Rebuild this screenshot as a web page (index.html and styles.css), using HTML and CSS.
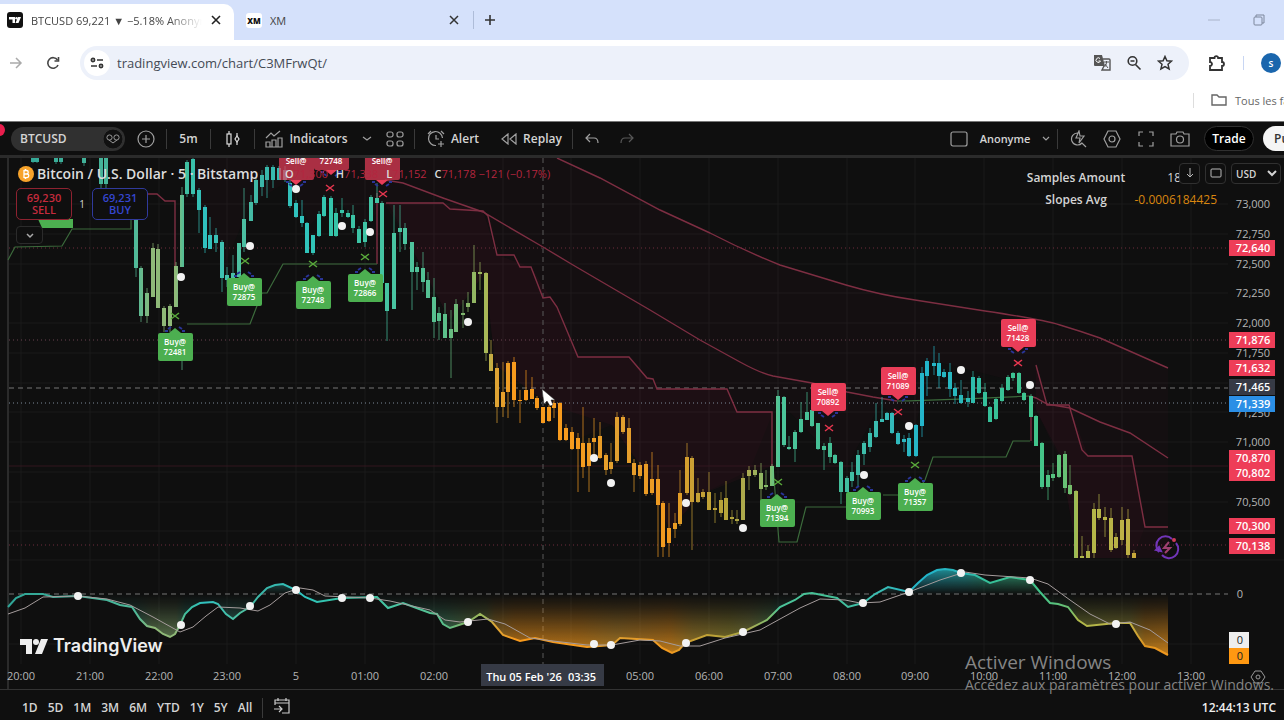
FILE: index.html
```html
<!DOCTYPE html>
<html lang="en">
<head>
    <meta charset="UTF-8">
    <title>BTCUSD 69,221</title>
    <link rel="stylesheet" href="styles.css">
</head>
<body>
<div class="tabs">
    <div class="tab active">
        <svg width="16" height="16" viewBox="0 0 16 16"><rect width="16" height="16" rx="3" fill="#111"/><path d="M2 5h6v6H5.500V7.500H2zM11 5h3l-2.500 6h-3z" fill="#fff"/><circle cx="9.500" cy="6.200" r="1.200" fill="#fff"/></svg>
        <a href="#" class="tab-title">BTCUSD 69,221 ▼ −5.18% Anonyme</a>
        <button class="plain" aria-label="Close tab"><svg width="12" height="12" viewBox="0 0 12 12"><path d="M2 2l8 8M10 2l-8 8" stroke="#222" stroke-width="1.600"/></svg></button>
    </div>
    <div class="tab">
        <span class="xm">XM</span>
        <a href="#" class="tab-title">XM</a>
        <button class="plain" aria-label="Close tab"><svg width="12" height="12" viewBox="0 0 12 12"><path d="M2 2l8 8M10 2l-8 8" stroke="#333" stroke-width="1.500"/></svg></button>
    </div>
    <button class="plain new-tab" aria-label="New tab"><svg width="12" height="12" viewBox="0 0 12 12"><path d="M6 1v10M1 6h10" stroke="#333" stroke-width="1.600"/></svg></button>
    <div class="window-buttons">
        <button class="plain" aria-label="Minimize"><svg width="14" height="14" viewBox="0 0 14 14"><path d="M1 7h12" stroke="#a9b4ca"/></svg></button>
        <button class="plain" aria-label="Restore"><svg width="14" height="14" viewBox="0 0 14 14" fill="none" stroke="#7d879c"><rect x="2" y="4" width="8" height="8" rx="1"/><path d="M4 4V2h8v8h-2"/></svg></button>
    </div>
</div>
<div class="address-row">
    <button class="plain" aria-label="Forward"><svg width="14" height="14" viewBox="0 0 14 14" fill="none" stroke="#aaa" stroke-width="1.500"><path d="M1 7h11M7 2l5 5-5 5"/></svg></button>
    <button class="plain" aria-label="Reload"><svg width="14" height="14" viewBox="0 0 14 14" fill="none" stroke="#444" stroke-width="1.600"><path d="M12 9A5.300 5.300 0 1 1 11.500 4"/><path d="M12.500 1v4H8.500"/></svg></button>
    <div class="address">
        <span class="site-info"><svg width="14" height="12" viewBox="0 0 14 12" fill="none" stroke="#333" stroke-width="1.700"><circle cx="3" cy="3" r="1.600"/><path d="M7 3h6M1 9h6"/><circle cx="11" cy="9" r="1.600"/></svg></span>
        <input type="text" aria-label="Address" value="tradingview.com/chart/C3MFrwQt/">
        <button class="plain" aria-label="Translate"><svg width="18" height="18" viewBox="0 0 18 18"><path d="M1 1h8l3 11H2a1 1 0 0 1-1-1z" fill="#555"/><path d="M10 5h6a1 1 0 0 1 1 1v10H9l2-4" fill="none" stroke="#555" stroke-width="1.400"/><path d="M11 8h5M13.500 7v1c0 3-2 5-2 5M12 10l3 4" fill="none" stroke="#555"/><path d="M7 4.500A2.300 2.300 0 1 0 7.500 7H5.500" fill="none" stroke="#fff"/></svg></button>
        <button class="plain" aria-label="Zoom"><svg width="16" height="16" viewBox="0 0 16 16" fill="none" stroke="#333" stroke-width="1.600"><circle cx="6.500" cy="6" r="4.300"/><path d="M9.500 9.500l5 5M4.500 6h4"/></svg></button>
        <button class="plain" aria-label="Bookmark"><svg width="16" height="16" viewBox="0 0 16 16" fill="none" stroke="#333" stroke-width="1.500"><path d="M8 1.500l1.900 4.300 4.600.4-3.500 3.100 1.100 4.600L8 11.500l-4.100 2.400L5 9.300 1.500 6.200l4.600-.4z"/></svg></button>
    </div>
    <button class="plain extensions" aria-label="Extensions"><svg width="18" height="18" viewBox="0 0 18 18" fill="none" stroke="#333" stroke-width="1.800"><path d="M2 4h4.500a1.800 1.800 0 0 1 3.600 0H14v4a2 2 0 0 1 0 4v4H2v-4a2 2 0 0 0 0-4z"/></svg></button>
    <span class="divider"></span>
    <button class="avatar">s</button>
</div>
<div class="bookmarks">
    <a href="#"><svg width="16" height="14" viewBox="0 0 16 14" fill="none" stroke="#666" stroke-width="1.400"><path d="M1 2h5l2 2h7v8H1z"/></svg><span>Tous les favoris</span></a>
</div>

<div class="tv">
    <div class="tv-top">
        <button class="symbol">BTCUSD<svg width="22" height="22" viewBox="0 0 22 22" fill="none" stroke="#999"><circle cx="11" cy="11" r="10" fill="#111" stroke="#333"/><path d="M11 15l-4-3M11 15l4-3"/><circle cx="7.500" cy="9.500" r="2.600"/><circle cx="14.500" cy="9.500" r="2.600"/></svg></button>
        <button class="tool add" aria-label="Compare"><svg width="18" height="18" viewBox="0 0 18 18"><circle cx="9" cy="9" r="8"/><path d="M9 5v8M5 9h8"/></svg></button>
        <span class="sep"></span>
        <button class="tool">5m</button>
        <span class="sep"></span>
        <button class="tool" aria-label="Chart type"><svg width="16" height="18" viewBox="0 0 16 18" class="bright"><path d="M4 1v3M4 14v3M12 3v3M12 12v3"/><rect x="2" y="4" width="4" height="10"/><path d="M12 6l2 3-2 3-2-3z"/></svg></button>
        <span class="sep"></span>
        <button class="tool indicators"><svg width="18" height="18" viewBox="0 0 18 18"><path d="M1 8l5-5 3 3 6-5M1 17v-5h4v5zM7 17v-7h4v7zM13 17V8h4v9zM1 17h16"/></svg>Indicators</button>
        <button class="tool small" aria-label="Templates"><svg width="10" height="6" viewBox="0 0 10 6"><path d="M1 1l4 3 4-3"/></svg></button>
        <button class="tool mid" aria-label="Layouts"><svg width="18" height="16" viewBox="0 0 18 16"><rect x="1" y="1" width="6" height="5" rx="2"/><rect x="11" y="1" width="6" height="5" rx="2"/><rect x="1" y="10" width="6" height="5" rx="2"/><rect x="11" y="10" width="6" height="5" rx="2"/></svg></button>
        <span class="sep"></span>
        <button class="tool alert"><svg width="18" height="18" viewBox="0 0 18 18"><path d="M15.500 8A7 7 0 1 0 9 15.500M9 5v4h3M1 4l3-3M14 1l3 3M11 14h6M14 11v6"/></svg>Alert</button>
        <button class="tool replay"><svg width="16" height="12" viewBox="0 0 16 12"><path d="M7 1L1 6l6 5zM15 1L9 6l6 5z"/></svg>Replay</button>
        <span class="sep"></span>
        <button class="tool mid" aria-label="Undo"><svg width="14" height="12" viewBox="0 0 14 12"><path d="M5 1L1 5l4 4M1 5h8q4 0 4 5"/></svg></button>
        <button class="tool redo" aria-label="Redo"><svg width="14" height="12" viewBox="0 0 14 12"><path d="M9 1l4 4-4 4M13 5H5Q1 5 1 10"/></svg></button>
        <div class="tv-right">
            <button class="tool layout-name"><svg width="18" height="16" viewBox="0 0 18 16"><rect x="1" y="1" width="16" height="14" rx="2"/></svg>Anonyme<svg class="chevron" width="8" height="6" viewBox="0 0 8 6"><path d="M1 1l3 3 3-3"/></svg></button>
            <span class="sep"></span>
            <button class="tool icon" aria-label="Quick search"><svg width="18" height="18" viewBox="0 0 18 18"><path d="M9 3a6 6 0 1 0 4 10l4 4M10 1L7 8h4l-1 5 5-7h-4z"/></svg></button>
            <button class="tool icon" aria-label="Settings"><svg width="18" height="18" viewBox="0 0 18 18"><path d="M5 1h8l4 8-4 8H5L1 9z"/><circle cx="9" cy="9" r="3"/></svg></button>
            <button class="tool icon" aria-label="Fullscreen"><svg width="16" height="16" viewBox="0 0 16 16"><path d="M1 5V1h4M11 1h4v4M15 11v4h-4M5 15H1v-4"/></svg></button>
            <button class="tool icon" aria-label="Snapshot"><svg width="20" height="16" viewBox="0 0 20 16"><path d="M1 3h5l1-2h6l1 2h5v12H1z"/><circle cx="10" cy="8.500" r="3.500"/></svg></button>
            <button class="trade">Trade</button>
            <button class="publish">Publish</button>
        </div>
    </div>

    <div class="chart">
        <svg id="plot" viewBox="0 158 1284 531" preserveAspectRatio="xMinYMin meet">
            <defs>
                <linearGradient id="trend" gradientUnits="userSpaceOnUse" x1="0" y1="0" x2="1168" y2="0"></linearGradient>
                <linearGradient id="fade" gradientUnits="userSpaceOnUse" x1="0" y1="560" x2="0" y2="655">
                    <stop offset="0" stop-color="#fff"/>
                    <stop offset="0.360" stop-color="#000"/>
                    <stop offset="0.500" stop-color="#222"/>
                    <stop offset="1" stop-color="#ccc"/>
                </linearGradient>
                <mask id="fadeMask" maskUnits="userSpaceOnUse" x="0" y="555" width="1284" height="110"><rect x="0" y="555" width="1284" height="110" fill="url(#fade)"/></mask>
            </defs>
            <g id="grid"></g>
            <g class="cloud">
                <path class="light" d="M187 158H557L600 178 710 233 780 265 846 285 915 300 1020 317 1100 338 1168 368V527H1145L1133 558H1078L1060 460 1036 410 1010 380 930 360 915 430 880 405 845 470 778 400 750 470 700 495 670 530 640 465 612 425 575 440 550 405 495 365 485 273 450 320 410 245 385 205 365 225 335 200 310 225 290 180 250 205 225 265 205 220z"/>
                <path d="M388 203H443L483 211 497 255 531 267 557 307 578 357H629L657 389H727L737 412H772V466L700 495 670 530 640 465 612 425 550 405 495 365 485 273 450 320 410 245z"/>
                <path d="M1036 365L1047 405H1069L1088 456H1132L1145 527H1168V558H1078L1060 455 1036 410z"/>
            </g>
            <g class="levels">
                <path class="dots-red" d="M9 248H1228M9 545H1228"/>
                <path class="dots-gray" d="M9 340H1228"/>
                <path class="solid-red" d="M9 466H1228"/>
                <path class="dots-blue" d="M9 403H1228"/>
                <path class="dashes" d="M9 388H1228M9 594H1228"/>
                <path class="dashes vertical" d="M543 158V664"/>
            </g>
            <g class="lines">
                <path class="red" d="M557 158L600 178 660 210 710 233Q745 251 780 265L846 285Q880 295 915 300L985 311Q1040 319 1060 325T1100 338L1168 368"/>
                <path class="red" d="M385 180L403 183 443 198 483 212 543 247 573 265 650 310 700 340 740 362Q760 373 773 376L812 383 847 392 873 397 897 401"/>
                <path class="green" d="M897 401Q950 400 1030 396"/>
                <path class="red" d="M1030 396L1036 398 1047 404 1070 408 1100 422 1130 433 1168 458"/>
                <path class="red" d="M386 203H443L450 209 483 211 488 216 497 255H514L520 267H531L543 298 550 297 557 307 578 357H629L647 378 653 379 657 389H727L737 412H772V466M1031 441V396M1036 365L1047 405H1069L1082 450 1088 456H1132L1145 527H1168M148 194H157L165 201H175V266M377 264V193"/>
                <path class="green" d="M8 260L15 247 62 246 72 229H131V219M187 324H250L262 293 267 293 283 264H377M773 466L779 542H797L806 507H848M883 495H915L925 480 933 457H1006L1013 441H1030"/>
            </g>
            <path d="M38 219h35v9H42z" fill="#4caf50"/>
            <g id="candles" stroke="url(#trend)"></g>
            <g id="osc"></g>
            <g id="marks"></g>
            <g id="axis"></g>
            <g transform="translate(1167 547)" fill="none" stroke="#7135b8" stroke-width="2"><path d="M-8 5A9 9 0 0 1 5-8M9-4A9 9 0 0 1-5 8"/><path d="M2-5l-5 6h6l-5 5" stroke="#a04070"/><path d="M-11 3l3-3 2 4z" fill="#8a4be0"/><circle cx="7" cy="-7" r="1" stroke="#d13a5a"/></g>
            <path d="M542 389l2 15 3-3 3 5 3-1-2-5h4z" fill="#fff" stroke="#222" stroke-width=".5"/>
            <g transform="translate(1258 677)" fill="none" stroke="#999"><path d="M-3-6h6l4 6-4 6h-6l-4-6z"/><circle r="2"/></g>
        </svg>

        <div class="legend">
            <svg width="16" height="16" viewBox="0 0 16 16"><circle cx="8" cy="8" r="8" fill="#f7a32b"/><path d="M6 4v8M6 4.500h2.500a1.700 1.700 0 0 1 0 3.500H6h3a1.800 1.800 0 0 1 0 3.600H6M7.500 3v2M7.500 11v2" fill="none" stroke="#fff" stroke-width="1.300"/></svg>
            <span class="name">Bitcoin / U.S. Dollar · 5 · Bitstamp</span>
            <span class="ohlc"><b>O</b>71,300 <b>H</b>71,338 <b>L</b>71,152 <b>C</b>71,178 −121 (−0.17%)</span>
        </div>
        <div class="deal">
            <button class="sell">69,230<br>SELL</button>
            <span>1</span>
            <button class="buy">69,231<br>BUY</button>
        </div>
        <button class="collapse" aria-label="Collapse legend"><svg width="8" height="6" viewBox="0 0 8 6" fill="none" stroke="#aaa" stroke-width="1.500"><path d="M1 1l3 3 3-3"/></svg></button>
        <table class="stats">
            <tr><th>Samples Amount</th><td class="count">18</td></tr>
            <tr><th>Slopes Avg</th><td>-0.0006184425</td></tr>
        </table>
        <div class="pane-tools">
            <button aria-label="Move pane down"><svg width="12" height="12" viewBox="0 0 12 12"><path d="M6 1v9M3 7l3 3 3-3"/></svg></button>
            <button aria-label="Maximize pane"><svg width="12" height="12" viewBox="0 0 12 12"><rect x="1" y="2" width="10" height="8" rx="1"/></svg></button>
            <select aria-label="Currency"><option>USD</option></select>
        </div>
        <div class="brand">
            <svg width="28" height="15" viewBox="0 0 28 15" fill="#eee"><path d="M0 0h12v15H6V6H0z"/><circle cx="16" cy="3" r="3"/><path d="M21 0h7l-6 15h-7z"/></svg>
            <span>TradingView</span>
        </div>
        <div class="watermark">
            <p class="title">Activer Windows</p>
            <p>Accédez aux paramètres pour activer Windows.</p>
        </div>
        <span class="record"></span>
    </div>

    <div class="tv-bottom">
        <button>1D</button>
        <button>5D</button>
        <button>1M</button>
        <button>3M</button>
        <button>6M</button>
        <button>YTD</button>
        <button>1Y</button>
        <button>5Y</button>
        <button>All</button>
        <span class="sep"></span>
        <button aria-label="Go to date"><svg width="18" height="18" viewBox="0 0 18 18" fill="none" stroke="#ccc" stroke-width="1.200"><path d="M2 8V3h14v13H9M2 6h14M5 1v3M13 1v3M1 12h8M6 9l3 3-3 3"/></svg></button>
        <span class="clock">12:44:13 UTC</span>
    </div>
</div>
<script src="script.js"></script>
</body>
</html>
```
FILE: styles.css
```css
* {
    box-sizing: border-box;
}
body {
    margin: 0;
    min-height: 100vh;
    display: flex;
    flex-direction: column;
    overflow: hidden;
    background-color: #ffffff;
    font-family: "Open Sans", "Noto Sans", sans-serif;
    font-size: 12px;
    color: #333333;
}
button, input, select {
    font: inherit;
    color: inherit;
    border: none;
    background: none;
    padding: 0;
}
a {
    color: inherit;
    text-decoration: none;
}
svg {
    flex: none;
}
.plain {
    display: flex;
    align-items: center;
    justify-content: center;
}

/* browser */
.tabs {
    height: 40px;
    background-color: #d5e1fb;
    display: flex;
    align-items: center;
}
.tab {
    width: 234px;
    height: 34px;
    padding: 0 12px 0 7px;
    display: flex;
    align-items: center;
    gap: 8px;
}
.tab.active {
    background-color: #ffffff;
    border-radius: 0 10px 0 0;
    height: 36px;
    padding-bottom: 4px;
    align-self: flex-end;
}
.tab + .tab {
    width: 240px;
    height: 18px;
    padding-left: 12px;
    padding-right: 13px;
    border-right: 1px solid #aebcd8;
}
.tab-title {
    flex: 1;
    overflow: hidden;
    white-space: nowrap;
    font-size: 11px;
    color: #444444;
}
.tab.active .tab-title {
    -webkit-mask-image: linear-gradient(90deg, #000 80%, transparent);
}
.xm {
    width: 16px;
    background-color: #ffffff;
    border-radius: 3px;
    font-size: 8px;
    font-weight: 800;
    line-height: 15px;
    text-align: center;
    color: #111111;
}
.new-tab {
    width: 32px;
}
.window-buttons {
    margin-left: auto;
    display: flex;
    gap: 31px;
    padding-right: 18px;
}
.address-row {
    height: 46px;
    display: flex;
    align-items: center;
    padding-left: 9px;
    gap: 23px;
}
.address {
    flex: 1;
    margin-left: -3px;
    height: 34px;
    border-radius: 17px;
    background-color: #edf1fa;
    display: flex;
    align-items: center;
    gap: 15px;
    padding: 0 16px 0 4px;
}
.address input {
    flex: 1;
    min-width: 0;
    margin-left: -8px;
    font-size: 13px;
    color: #444a55;
}
.site-info {
    width: 26px;
    height: 26px;
    border-radius: 50%;
    background-color: #ffffff;
    display: flex;
    align-items: center;
    justify-content: center;
}
.extensions {
    margin-left: -4px;
}
.divider {
    width: 1px;
    height: 14px;
    margin: 0 -6px;
    background-color: #c8d6f3;
}
.avatar {
    width: 20px;
    height: 20px;
    margin-right: 3px;
    border-radius: 50%;
    background-color: #1a66ad;
    color: #ffffff;
    font-size: 10px;
    font-weight: 600;
    line-height: 18px;
}
.bookmarks {
    height: 35px;
    display: flex;
    justify-content: flex-end;
    align-items: center;
    overflow: hidden;
    padding-bottom: 7px;
}
.bookmarks a {
    width: 91px;
    padding-left: 17px;
    border-left: 1px solid #dddddd;
    display: flex;
    align-items: center;
    gap: 8px;
    font-size: 11px;
    color: #666666;
    white-space: nowrap;
    overflow: hidden;
}

/* top toolbar */
.tv {
    flex: 1;
    display: flex;
    flex-direction: column;
    background-color: #0f0f0f;
    border-top: 1px solid #777777;
    color: #d4d4d4;
}
.tv-top {
    height: 36px;
    border-bottom: 3px solid #2b2b2b;
    padding-left: 11px;
    display: flex;
    align-items: center;
    font-weight: 600;
}
.symbol {
    width: 114px;
    height: 24px;
    padding: 0 1px 0 9px;
    border-radius: 12px;
    background-color: #303030;
    display: flex;
    align-items: center;
    justify-content: space-between;
}
.tool {
    width: 43px;
    height: 30px;
    display: flex;
    align-items: center;
    justify-content: center;
    gap: 6px;
}
.tool svg {
    fill: none;
    stroke: #a0a0a0;
    stroke-width: 1.2;
}
.tool .bright {
    stroke: #dddddd;
}
.tool.add {
    width: 41px;
}
.tool.indicators {
    width: 103px;
}
.tool.small {
    width: 18px;
}
.tool.mid {
    width: 38px;
}
.tool.alert {
    width: 76px;
}
.tool.replay {
    width: 81px;
}
.tool.icon {
    width: 34px;
}
.tool.redo {
    width: 32px;
    opacity: .5;
}
.sep {
    width: 1px;
    height: 20px;
    background-color: #3a3a3a;
}
.tv-right {
    margin-left: auto;
    display: flex;
    align-items: center;
}
.tool.layout-name {
    width: 114px;
    gap: 12px;
    font-size: 11px;
}
.layout-name + .sep {
    margin-right: 3px;
}
.trade {
    width: 50px;
    height: 25px;
    margin: 0 9px 0 7px;
    border: 1px solid #303030;
    border-radius: 13px;
    background-color: #000000;
    color: #ffffff;
}
.publish {
    width: 21px;
    height: 25px;
    padding-left: 11px;
    border-radius: 13px 0 0 13px;
    background-color: #f5f5f5;
    color: #333333;
    overflow: hidden;
    text-align: left;
}

/* chart */
.chart {
    flex: 1;
    position: relative;
    background: linear-gradient(90deg, #0f0f0f 7px, #2b2b2b 7px, #2b2b2b 9px, #0f0f0f 9px);
    border-bottom: 1px solid #333333;
}
#plot {
    display: block;
    width: 100%;
}
.cloud path {
    fill: #a01848;
    fill-opacity: .07;
}
.cloud .light {
    fill-opacity: .04;
}
.levels path, .lines path, .grid-line {
    fill: none;
    stroke-width: 1;
}
.grid-line {
    stroke: #1a1a1b;
}
.levels .dots-red {
    stroke: #6e2c3d;
    stroke-dasharray: 1 3;
}
.levels .dots-gray {
    stroke: #6a4350;
    stroke-dasharray: 1 3;
}
.levels .dots-blue {
    stroke: #7d8a99;
    stroke-dasharray: 1 3;
}
.levels .solid-red {
    stroke: #33161f;
}
.levels .dashes {
    stroke: #777777;
    stroke-dasharray: 5 4;
}
.levels .vertical {
    stroke: #5a5a5a;
}
.lines .red {
    stroke: #7d2e42;
    stroke-width: 1.4;
}
.lines .green {
    stroke: #3c6b3c;
    stroke-width: 1.2;
}
.mark-text {
    font-size: 8px;
    font-weight: 600;
    fill: #ffffff;
    text-anchor: middle;
}
.axis-text {
    font-size: 11px;
    fill: #b5b5b5;
    text-anchor: middle;
}
.axis-text.tag {
    font-weight: 600;
    fill: #ffffff;
}
.axis-text.dark {
    fill: #222222;
}
.legend {
    position: absolute;
    top: 6px;
    left: 18px;
    display: flex;
    align-items: center;
    font-size: 11px;
    line-height: 20px;
    white-space: nowrap;
}
.legend .name {
    width: 246px;
    padding-left: 3px;
    font-size: 14px;
    font-weight: 600;
    color: #dddddd;
}
.ohlc {
    color: #b3263f;
}
.ohlc b {
    color: #dddddd;
    font-weight: 600;
    margin-left: 5px;
}
.deal {
    position: absolute;
    top: 30px;
    left: 16px;
    display: flex;
    align-items: center;
    font-size: 10px;
}
.deal button {
    width: 56px;
    height: 32px;
    border: 1px solid #8e2230;
    border-radius: 5px;
    background-color: #0f0f0f;
    color: #c52b3d;
    font-size: 11px;
    line-height: 12px;
    font-weight: 600;
}
.deal .buy {
    border-color: #303a9c;
    color: #3546d0;
}
.deal span {
    width: 20px;
    text-align: center;
}
.collapse {
    position: absolute;
    top: 68px;
    left: 16px;
    width: 27px;
    height: 18px;
    border: 1px solid #2b2b2b;
    border-radius: 4px;
    background-color: #0f0f0f;
    line-height: 6px;
}
.stats {
    position: absolute;
    top: 9px;
    right: 67px;
    border-collapse: collapse;
    font-size: 12px;
    line-height: 22px;
}
.stats th {
    width: 110px;
    padding: 0;
    font-weight: 600;
}
.stats td {
    width: 86px;
    padding: 0;
    text-align: right;
    color: #d9860f;
}
.stats .count {
    padding-right: 36px;
    color: #d4d4d4;
}
.pane-tools {
    position: absolute;
    top: 5px;
    right: 3px;
    display: flex;
    gap: 5px;
}
.pane-tools button {
    width: 21px;
    height: 21px;
    border: 1px solid #303030;
    border-radius: 4px;
    background-color: #0f0f0f;
    line-height: 10px;
}
.pane-tools svg {
    fill: none;
    stroke: #bbbbbb;
}
.pane-tools select {
    width: 50px;
    height: 21px;
    border: 1px solid #303030;
    border-radius: 4px;
    background-color: #0f0f0f;
    font-size: 10px;
    font-weight: 600;
}
.brand {
    position: absolute;
    bottom: 32px;
    left: 20px;
    display: flex;
    align-items: center;
    gap: 5px;
    font-family: Inter, sans-serif;
    font-size: 18px;
    font-weight: 600;
    line-height: 22px;
    color: #eeeeee;
}
.watermark {
    position: absolute;
    bottom: -6px;
    right: 10px;
    color: #858585;
    font-size: 14px;
    line-height: 20px;
}
.watermark p {
    margin: 0;
}
.watermark .title {
    font-size: 19px;
    line-height: 25px;
}
.record {
    position: absolute;
    top: -34px;
    left: -6px;
    width: 11px;
    height: 12px;
    border-radius: 50%;
    background-color: #e91e4d;
}
.tv-bottom {
    height: 31px;
    padding: 4px 8px 0 22px;
    display: flex;
    align-items: center;
    gap: 10px;
    font-weight: 600;
    font-size: 12px;
}
.clock {
    margin-left: auto;
    color: #eeeeee;
}
```
FILE: script.js
```js
const NS = 'http://www.w3.org/2000/svg';

function draw(parent, tag, attrs, text) {
    const el = document.createElementNS(NS, tag);
    for (const key in attrs) {
        el.setAttribute(key, attrs[key]);
    }
    if (text) el.textContent = text;
    document.getElementById(parent).appendChild(el);
}

// colour of the trend along the time axis
const stops = [
    [8, '#2fa597'], [135, '#4db99a'], [152, '#8fb978'], [176, '#8fb978'], [186, '#3fbf9f'], [205, '#2fc0c0'],
    [240, '#4fc0a0'], [262, '#3ab5a8'], [300, '#2fc4c0'], [335, '#35c4a8'], [405, '#4cc4a0'], [445, '#5bbf8a'],
    [465, '#82b56a'], [486, '#a5b858'], [495, '#dba436'], [515, '#f99a1c'], [580, '#f59b1e'], [617, '#e0a030'],
    [640, '#e89c28'], [670, '#f39a1e'], [693, '#c9a034'], [730, '#b3a43a'], [750, '#a9ac54'], [770, '#7fbf6f'],
    [779, '#4cc49a'], [830, '#45bf95'], [875, '#3bbcb0'], [925, '#22b5cc'], [965, '#2ab8b8'], [985, '#35c09a'],
    [1040, '#42c48a'], [1070, '#6fc070'], [1078, '#b0b84a'], [1130, '#bfb045'], [1145, '#e0941f'], [1168, '#f39a1e']
];
stops.forEach(s => draw('trend', 'stop', {offset: s[0] / 1168, 'stop-color': s[1]}));

// x, high, top, bottom, low
const candles = [
    [33, 158, 158, 162, 163], [37, 158, 158, 162, 163], [56, 158, 158, 162, 164], [61, 158, 158, 162, 164],
    [84, 158, 158, 163, 166], [101, 158, 158, 184, 190], [106, 158, 158, 184, 188],
    [136, 218, 220, 268, 277], [141, 266, 268, 316, 322], [147, 288, 293, 316, 323], [153, 243, 248, 297, 297],
    [158, 244, 249, 308, 308], [164, 306, 308, 326, 332], [170, 304, 306, 326, 332], [176, 262, 266, 307, 307],
    [182, 187, 195, 267, 267], [182, 360, 360, 361, 370], [187, 160, 162, 194, 197], [193, 158, 159, 194, 197],
    [199, 188, 190, 210, 233], [205, 205, 207, 248, 253], [210, 217, 235, 249, 249], [216, 228, 235, 243, 252],
    [222, 240, 242, 278, 292], [227, 267, 275, 280, 287], [233, 255, 273, 280, 287], [239, 243, 243, 277, 277],
    [244, 188, 219, 247, 252], [251, 195, 202, 221, 221], [256, 178, 180, 203, 205], [262, 170, 175, 187, 196],
    [267, 165, 167, 180, 198], [273, 165, 167, 180, 188], [279, 166, 168, 180, 180], [285, 166, 170, 180, 182],
    [290, 180, 183, 206, 208], [296, 200, 203, 217, 218], [302, 200, 216, 223, 227], [307, 222, 223, 253, 253],
    [313, 235, 235, 253, 255], [319, 211, 214, 236, 237], [324, 195, 197, 216, 217], [331, 196, 198, 236, 236],
    [336, 208, 213, 236, 237], [342, 198, 210, 213, 217], [348, 210, 213, 217, 218], [353, 205, 215, 228, 233],
    [359, 226, 229, 243, 243], [365, 219, 222, 242, 247], [371, 195, 197, 221, 222], [377, 183, 198, 203, 203],
    [382, 201, 203, 283, 283], [387, 283, 283, 311, 341], [394, 205, 233, 309, 309], [400, 205, 228, 232, 252],
    [405, 223, 228, 244, 250], [412, 242, 242, 272, 310], [417, 262, 267, 272, 290], [423, 252, 268, 282, 292],
    [428, 272, 280, 298, 298], [434, 278, 297, 322, 338], [439, 307, 313, 321, 340], [445, 303, 314, 338, 338],
    [451, 310, 329, 338, 378], [456, 299, 304, 332, 332], [463, 300, 313, 315, 328], [468, 292, 303, 307, 312],
    [474, 245, 272, 303, 303], [480, 262, 272, 274, 290], [486, 272, 273, 353, 361], [491, 340, 354, 371, 371],
    [497, 363, 368, 407, 423], [503, 362, 392, 407, 417], [508, 361, 363, 392, 418], [514, 357, 362, 400, 407],
    [520, 390, 400, 401, 423], [526, 370, 390, 400, 401], [532, 377, 389, 399, 399], [537, 396, 398, 408, 410],
    [543, 407, 407, 423, 423], [549, 405, 407, 421, 422], [554, 400, 403, 408, 418], [560, 402, 403, 440, 441],
    [566, 424, 428, 440, 441], [572, 427, 432, 449, 450], [578, 433, 438, 449, 492], [583, 407, 443, 467, 478],
    [589, 438, 443, 466, 492], [594, 418, 438, 442, 462], [600, 422, 436, 458, 459], [606, 453, 455, 470, 475],
    [611, 443, 462, 469, 474], [617, 412, 417, 461, 463], [623, 415, 417, 432, 434], [629, 418, 428, 463, 463],
    [634, 459, 463, 475, 492], [640, 462, 465, 476, 479], [646, 461, 464, 494, 496], [652, 452, 479, 493, 495],
    [658, 465, 479, 505, 557], [663, 501, 503, 547, 557], [669, 503, 528, 543, 557], [675, 513, 523, 529, 538],
    [680, 470, 493, 524, 526], [687, 443, 457, 493, 495], [692, 456, 458, 502, 550], [698, 478, 493, 502, 503],
    [703, 489, 492, 497, 499], [709, 472, 492, 510, 510], [715, 493, 508, 510, 523], [721, 492, 500, 513, 517],
    [726, 481, 498, 520, 520], [732, 510, 517, 519, 524], [737, 510, 519, 521, 524], [743, 473, 478, 520, 520],
    [749, 466, 470, 476, 490], [755, 465, 470, 475, 477], [761, 463, 473, 489, 510], [766, 470, 485, 487, 490],
    [772, 464, 466, 486, 486], [778, 390, 396, 467, 467], [784, 396, 397, 445, 447], [789, 436, 447, 449, 450],
    [795, 430, 432, 449, 462], [801, 402, 419, 432, 433], [807, 392, 412, 420, 420], [812, 407, 410, 426, 427],
    [818, 423, 423, 449, 450], [824, 443, 446, 450, 470], [830, 437, 443, 457, 463], [835, 454, 455, 463, 464],
    [841, 461, 462, 492, 504], [847, 476, 478, 492, 492], [852, 462, 472, 481, 487], [858, 450, 455, 475, 487],
    [864, 441, 443, 454, 465], [870, 428, 433, 447, 452], [876, 403, 421, 437, 438], [882, 397, 419, 422, 422],
    [887, 412, 413, 420, 420], [892, 412, 413, 433, 434], [898, 431, 433, 444, 445], [904, 435, 439, 442, 452],
    [909, 433, 438, 456, 457], [916, 424, 425, 456, 457], [922, 367, 373, 426, 437], [927, 358, 361, 376, 396],
    [934, 346, 363, 366, 375], [939, 353, 363, 376, 388], [944, 369, 372, 377, 378], [950, 363, 372, 389, 397],
    [955, 383, 388, 396, 404], [961, 380, 395, 403, 404], [968, 391, 398, 402, 407], [973, 371, 377, 403, 403],
    [979, 376, 378, 393, 394], [985, 383, 392, 406, 407], [990, 406, 407, 422, 422], [996, 398, 399, 419, 420],
    [1002, 384, 388, 401, 402], [1008, 375, 377, 390, 391], [1013, 372, 373, 378, 381], [1019, 372, 373, 393, 394],
    [1024, 392, 393, 400, 401], [1031, 394, 396, 417, 417], [1036, 415, 416, 446, 446], [1042, 442, 443, 487, 489],
    [1048, 470, 475, 487, 500], [1053, 463, 474, 478, 481], [1059, 454, 455, 477, 478], [1065, 451, 454, 488, 493],
    [1070, 465, 485, 494, 495], [1076, 490, 491, 558, 558], [1082, 536, 556, 558, 558], [1088, 545, 551, 558, 558],
    [1094, 503, 509, 553, 558], [1099, 494, 509, 518, 520], [1105, 507, 517, 520, 537], [1111, 508, 518, 550, 552],
    [1116, 533, 537, 548, 549], [1122, 507, 520, 540, 545], [1128, 509, 519, 555, 558], [1134, 550, 553, 558, 558]
];
candles.forEach(c => {
    draw('candles', 'path', {d: `M${c[0]} ${c[1]}V${c[4]}`, 'stroke-width': 1, opacity: 0.7});
    draw('candles', 'path', {d: `M${c[0]} ${c[2]}V${c[3]}`, 'stroke-width': 4});
});

// grid and time axis
const hours = ['20:00', '21:00', '22:00', '23:00', '5', '01:00', '02:00', '', '', '05:00', '06:00', '07:00', '08:00', '09:00', '10:00', '11:00', '12:00', '13:00'];
hours.forEach((h, i) => {
    const x = Math.round(21 + i * 68.8);
    draw('grid', 'path', {class: 'grid-line', d: `M${x} 158V664`});
    if (h) draw('axis', 'text', {class: 'axis-text', x: x, y: 680}, h);
});
for (let y = 204; y < 560; y += 29.75) {
    draw('grid', 'path', {class: 'grid-line', d: `M9 ${Math.round(y)}H1228`});
}
draw('grid', 'path', {class: 'grid-line', d: 'M9 560H1284M9 644H1228'});

// price axis
const prices = [['73,000', 204], ['72,750', 234], ['72,500', 264], ['72,250', 293], ['72,000', 323], ['71,750', 353], ['71,250', 413], ['71,000', 442], ['70,500', 502]];
prices.forEach(p => draw('axis', 'text', {class: 'axis-text', x: 1253, y: p[1] + 4}, p[0]));
draw('axis', 'text', {class: 'axis-text', x: 1240, y: 598}, '0');

const tags = [
    ['72,640', 248, '#ee3d58'], ['71,876', 340, '#ee3d58'], ['71,632', 368, '#ee3d58'], ['71,465', 387, '#363a45'],
    ['71,339', 404, '#2b8fe6'], ['70,870', 458, '#ee3d58'], ['70,802', 473, '#ee3d58'], ['70,300', 526, '#ee3d58'], ['70,138', 546, '#ee3d58']
];
tags.forEach(t => {
    draw('axis', 'rect', {x: 1229, y: t[1] - 8, width: 46, height: 16, fill: t[2]});
    draw('axis', 'text', {class: 'axis-text tag', x: 1253, y: t[1] + 4}, t[0]);
});
draw('axis', 'rect', {x: 1229, y: 632, width: 20, height: 16, fill: '#eeeeee'});
draw('axis', 'rect', {x: 1229, y: 648, width: 20, height: 16, fill: '#ff9811'});
draw('axis', 'text', {class: 'axis-text dark', x: 1240, y: 644}, '0');
draw('axis', 'text', {class: 'axis-text dark', x: 1240, y: 660}, '0');
draw('axis', 'rect', {x: 481, y: 664, width: 123, height: 22, fill: '#363a45'});
draw('axis', 'text', {class: 'axis-text tag', x: 524, y: 681}, "Thu 05 Feb '26");
draw('axis', 'text', {class: 'axis-text tag', x: 582, y: 681}, '03:35');

// oscillator
const main = '8,607 16,598 25,594 43,594 53,597 78,596 107,600 120,605 132,607 140,619 147,626 155,628 163,634 170,637 175,634 180,625 185,614 192,607 200,603 213,602 218,604 226,614 233,619 240,613 250,607 258,597 267,588 275,585 283,584 296,590 305,597 317,602 342,598 377,597 388,608 403,603 430,613 437,614 443,624 450,628 468,622 480,614 492,622 503,635 520,641 535,638 553,642 587,647 612,645 620,638 653,640 662,648 672,653 679,650 685,643 707,635 725,637 743,632 767,620 780,607 795,600 804,594 812,593 837,598 848,607 863,603 875,594 888,587 909,592 918,583 927,575 937,570 945,569 953,570 961,573 975,575 990,583 1010,577 1030,580 1040,592 1050,603 1058,604 1068,607 1078,620 1087,626 1116,623 1130,623 1138,636 1145,646 1155,648 1168,655';
const signal = '8,614 25,608 43,597 78,596 107,599 130,605 153,617 180,632 193,627 206,616 218,607 240,608 258,611 270,605 285,593 300,588 313,590 325,596 370,598 390,601 430,610 445,620 460,622 488,619 505,624 530,638 553,641 587,645 612,645 640,640 660,641 680,646 700,646 725,638 760,630 800,608 820,599 845,600 860,603 880,602 909,592 940,580 965,572 985,575 1030,578 1048,584 1070,600 1090,614 1110,624 1130,622 1150,630 1168,643';
draw('osc', 'polygon', {points: `8,594 ${main} 1168,594`, fill: 'url(#trend)', mask: 'url(#fadeMask)'});
draw('osc', 'polyline', {points: main, fill: 'none', stroke: 'url(#trend)', 'stroke-width': 2});
draw('osc', 'polyline', {points: signal, fill: 'none', stroke: '#a59c9c', 'stroke-width': 1});

// buy and sell labels
const marks = [
    [175, 347, 'Buy@', '72481'], [244, 292, 'Buy@', '72875'], [313, 295, 'Buy@', '72748'], [365, 288, 'Buy@', '72866'],
    [777, 513, 'Buy@', '71394'], [863, 506, 'Buy@', '70993'], [915, 497, 'Buy@', '71357'],
    [828, 397, 'Sell@', '70892'], [898, 381, 'Sell@', '71089'], [1018, 333, 'Sell@', '71428'],
    [296, 166, 'Sell@', ''], [331, 156, '', '72748'], [382, 166, 'Sell@', '']
];
marks.forEach(m => {
    const [x, y, side, price] = m;
    const buy = side == 'Buy@';
    const dir = buy ? -1 : 1;
    const edge = y + 14 * dir;
    draw('marks', 'path', {d: `M${x - 7} ${edge + 4 * dir}l3 ${2 * dir}M${x + 7} ${edge + 4 * dir}l-3 ${2 * dir}M${x - 10} ${edge + 2 * dir}l3 0M${x + 10} ${edge + 2 * dir}l-3 0`, stroke: '#2a3598', 'stroke-width': 2});
    draw('marks', 'path', {d: `M${x - 6} ${edge}L${x} ${edge + 5 * dir}L${x + 6} ${edge}z`, fill: buy ? '#4caf50' : '#e93d58'});
    draw('marks', 'rect', {x: x - 17, y: y - 14, width: 35, height: 28, rx: 2, fill: buy ? '#4caf50' : '#e93d58', opacity: y < 170 ? 0.7 : 1});
    if (side) draw('marks', 'text', {class: 'mark-text', x: x, y: y - 2}, side);
    if (price) draw('marks', 'text', {class: 'mark-text', x: x, y: y + 8}, price);
});

const crosses = [[175, 316, 1], [245, 261, 1], [313, 264, 1], [365, 257, 1], [778, 482, 1], [915, 465, 1], [330, 188, 0], [383, 194, 0], [829, 428, 0], [898, 412, 0], [1018, 363, 0]];
crosses.forEach(c => draw('marks', 'path', {d: `M${c[0] - 4} ${c[1] - 3}l8 6m0 -6l-8 6`, stroke: c[2] ? '#59a83b' : '#e5364f', 'stroke-width': 1.5}));

const dots = [
    [181, 277], [250, 246], [296, 189], [342, 226], [370, 232], [468, 322], [594, 458], [611, 483], [686, 503], [743, 528], [864, 475], [909, 426], [961, 370], [1030, 385],
    [78, 596], [181, 625], [250, 606], [296, 590], [342, 598], [370, 598], [468, 622], [594, 644], [611, 645], [686, 643], [743, 632], [863, 603], [909, 592], [961, 573], [1030, 580], [1116, 624]
];
dots.forEach(d => draw('marks', 'circle', {cx: d[0], cy: d[1], r: 4, fill: '#f2f2f2'}));
```
